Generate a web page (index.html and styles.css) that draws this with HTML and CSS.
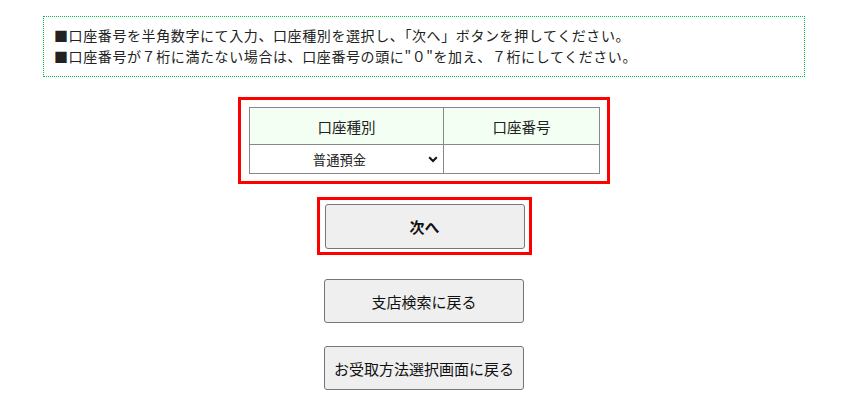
FILE: index.html
```html
<!DOCTYPE html>
<html lang="ja">
<head>
    <meta charset="UTF-8">
    <meta name="viewport" content="width=device-width, initial-scale=1.0">
    <title>口座情報入力</title>
    <link rel="stylesheet" href="styles.css">
</head>
<body>
    <div class="page">
        <div class="notice">
            <div>■口座番号を半角数字にて入力、口座種別を選択し、「次へ」ボタンを押してください。</div>
            <div>■口座番号が７桁に満たない場合は、口座番号の頭に"０"を加え、７桁にしてください。</div>
        </div>

        <div class="account-box">
            <table class="account-table">
                <tr>
                    <th class="col-type">口座種別</th>
                    <th>口座番号</th>
                </tr>
                <tr>
                    <td>
                        <div class="select-wrap">
                            <select class="account-select">
                                <option>普通預金</option>
                                <option>当座預金</option>
                            </select>
                            <svg class="chevron" width="10" height="7" viewBox="0 0 10 7">
                                <path d="M1.2 1.3 L5 5 L8.8 1.3" fill="none" stroke="#111" stroke-width="2"/>
                            </svg>
                        </div>
                    </td>
                    <td><input type="text" class="account-input" maxlength="7"></td>
                </tr>
            </table>
        </div>

        <div class="next-box">
            <button class="button button-next">次へ</button>
        </div>

        <button class="button button-back">支店検索に戻る</button>
        <button class="button button-back button-last">お受取方法選択画面に戻る</button>
    </div>
</body>
</html>
```

FILE: styles.css
```css
body {
    margin: 0;
    font-family: "Noto Sans CJK JP", "Noto Sans", sans-serif;
    color: #222;
    background: #fff;
}
.page {
    width: 848px;
    display: flex;
    flex-direction: column;
    align-items: center;
}
.notice {
    align-self: stretch;
    margin: 16px 43px 0;
    border: 1px dotted #00c040;
    padding: 8px 10px 9px 10px;
    font-size: 14px;
    line-height: 21px;
    letter-spacing: 0.6px;
}
.account-box {
    margin-top: 20px;
    border: 3px solid #ff0000;
    padding: 7px 7px 7px 8px;
}
.account-table {
    border-collapse: collapse;
    width: 351px;
}
.account-table th,
.account-table td {
    border: 1px solid #888;
    padding: 0;
    text-align: center;
}
.account-table th {
    height: 36px;
    background-color: #f2fff2;
    font-weight: normal;
    font-size: 14.5px;
}
.account-table td {
    height: 28px;
}
.col-type {
    width: 193px;
}
.select-wrap {
    position: relative;
}
.account-select {
    appearance: none;
    -webkit-appearance: none;
    width: 100%;
    height: 28px;
    border: none;
    background: transparent;
    font-family: inherit;
    font-size: 13.33px;
    color: #222;
    text-align: center;
    text-align-last: center;
    padding: 0 14px 0 0;
    outline: none;
}
.chevron {
    position: absolute;
    right: 5px;
    top: 11px;
    pointer-events: none;
}
.account-input {
    width: 100%;
    height: 28px;
    border: none;
    padding: 0 6px;
    box-sizing: border-box;
    font-family: inherit;
    font-size: 14px;
    outline: none;
}
.next-box {
    margin-top: 13px;
    border: 3px solid #ff0000;
    padding: 4px 4px 3px 5px;
}
.button {
    display: block;
    width: 200px;
    height: 44px;
    font-family: inherit;
    font-size: 15px;
    color: #111;
    background-color: #efefef;
    border: 1px solid #767676;
    border-radius: 3px;
    cursor: pointer;
}
.button:hover {
    background-color: #e5e5e5;
}
.button-next {
    height: 45px;
    font-weight: bold;
}
.button-back {
    margin-top: 24px;
}
.button-last {
    margin-top: 23px;
}
```
